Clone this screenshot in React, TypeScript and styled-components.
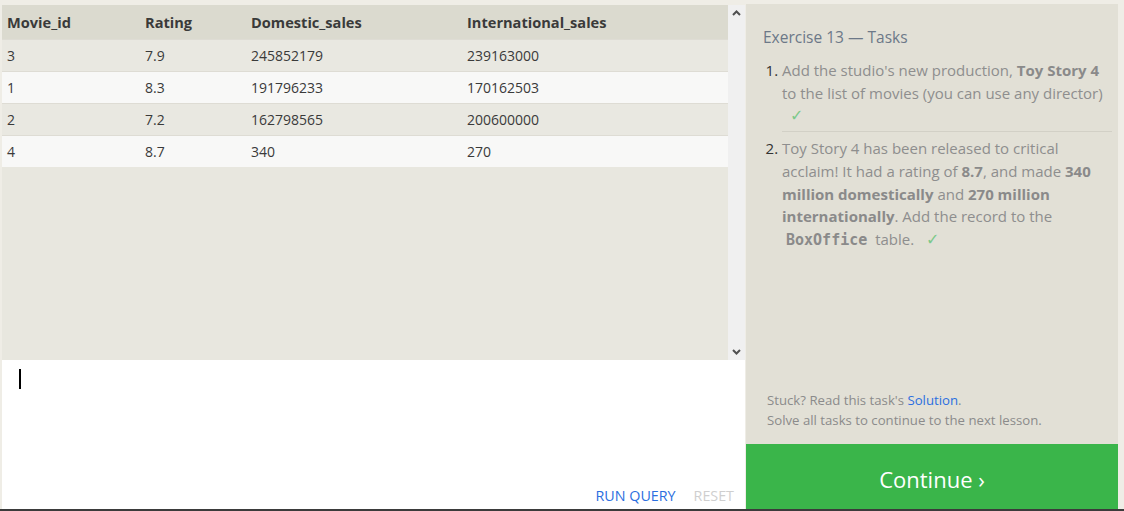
import React from "react";
import styled, { createGlobalStyle } from "styled-components";

const Global = createGlobalStyle`
  html, body { margin: 0; padding: 0; }
  body {
    background: #efede6;
    font-family: "Open Sans", "Noto Sans", sans-serif;
    overflow: hidden;
  }
`;

const Page = styled.div`
  width: 1124px;
  height: 511px;
  box-sizing: border-box;
  display: flex;
  padding: 4px 6px 0 2px;
  border-bottom: 2px solid #3b3b3b;
`;

const LeftCol = styled.div`
  width: 743px;
  display: flex;
  flex-direction: column;
  padding-top: 1px;
`;

const ResultArea = styled.div`
  height: 355px;
  display: flex;
  background: #e8e7df;
`;

const TableWrap = styled.div`
  flex: 1;
  overflow: hidden;
`;

const Table = styled.table`
  width: 100%;
  table-layout: fixed;
  border-collapse: collapse;
  font-size: 14px;
  color: #333;
`;

const Th = styled.th<{ $w?: number }>`
  box-sizing: border-box;
  text-align: left;
  font-weight: 700;
  font-size: 14.6px;
  background: #dbdacf;
  height: 34px;
  padding: 0 0 0 5px;
  width: ${(p) => (p.$w ? `${p.$w}px` : "auto")};
  color: #3a3a3a;
`;

const Tr = styled.tr<{ $alt: boolean }>`
  background: ${(p) => (p.$alt ? "#f8f8f7" : "#e9e8e1")};
  border-top: 1px solid #dedcd4;
`;

const Td = styled.td`
  height: 31px;
  padding: 0 0 0 5px;
  color: #3a3a3a;
`;

const ScrollBar = styled.div`
  width: 17px;
  background: #f0f0f0;
  display: flex;
  flex-direction: column;
  justify-content: space-between;
  align-items: center;
  padding: 5px 0;
  box-sizing: border-box;
`;

const Editor = styled.div`
  flex: 1;
  background: #fff;
  display: flex;
  flex-direction: column;
  justify-content: space-between;
  padding: 9px 11px 4px 17px;
`;

const Caret = styled.div`
  width: 2px;
  height: 20px;
  background: #000;
`;

const Actions = styled.div`
  display: flex;
  justify-content: flex-end;
  gap: 18px;
  font-size: 14.3px;
`;

const ActionLink = styled.span<{ $muted?: boolean }>`
  color: ${(p) => (p.$muted ? "#cfcfcf" : "#2b6fe0")};
`;

const RightCol = styled.div`
  width: 372px;
  margin-left: 1px;
  background: #e2e0d6;
  display: flex;
  flex-direction: column;
`;

const TaskBody = styled.div`
  flex: 1;
  padding: 22px 6px 0 17px;
`;

const Title = styled.div`
  font-size: 15.5px;
  color: #6c7888;
  margin-bottom: 11px;
`;

const List = styled.ol`
  margin: 0;
  padding-left: 19px;
  font-size: 15px;
  line-height: 22.7px;
  color: #8e8e8e;
`;

const Item = styled.li<{ $sep?: boolean }>`
  &::marker { color: #333; }
  ${(p) =>
    p.$sep
      ? `border-bottom: 1px solid #d2d0c6; padding-bottom: 3px; margin-bottom: 5px;`
      : ""}
`;

const B = styled.b`
  color: #8a8a8a;
`;

const Code = styled.code`
  font-family: "DejaVu Sans Mono", monospace;
  font-weight: 700;
  font-size: 15px;
  padding: 0 4px;
  color: #8a8a8a;
`;

const Check = styled.span`
  color: #7cc98a;
  margin-left: 8px;
  font-size: 16px;
  font-family: "DejaVu Sans", sans-serif;
`;

const Footer = styled.div`
  padding: 0 0 14px 21px;
  font-size: 13.2px;
  line-height: 20px;
  color: #8b8b8b;
`;

const Link = styled.span`
  color: #2b6fe0;
`;

const Continue = styled.div`
  height: 65px;
  box-sizing: border-box;
  padding-top: 5px;
  background: #3ab54a;
  color: #fff;
  font-size: 22px;
  display: flex;
  align-items: center;
  justify-content: center;
`;

const Arrow = ({ up }: { up?: boolean }) => (
  <svg width="9" height="6" viewBox="0 0 9 6">
    <path
      d={up ? "M1 5 L4.5 1.5 L8 5" : "M1 1 L4.5 4.5 L8 1"}
      fill="none"
      stroke="#505050"
      strokeWidth="2"
    />
  </svg>
);

const rows = [
  ["3", "7.9", "245852179", "239163000"],
  ["1", "8.3", "191796233", "170162503"],
  ["2", "7.2", "162798565", "200600000"],
  ["4", "8.7", "340", "270"],
];

export default function App() {
  return (
    <>
      <Global />
      <Page>
        <LeftCol>
          <ResultArea>
            <TableWrap>
              <Table>
                <thead>
                  <tr>
                    <Th $w={138}>Movie_id</Th>
                    <Th $w={106}>Rating</Th>
                    <Th $w={216}>Domestic_sales</Th>
                    <Th>International_sales</Th>
                  </tr>
                </thead>
                <tbody>
                  {rows.map((r, i) => (
                    <Tr key={i} $alt={i % 2 === 1}>
                      {r.map((c, j) => (
                        <Td key={j}>{c}</Td>
                      ))}
                    </Tr>
                  ))}
                </tbody>
              </Table>
            </TableWrap>
            <ScrollBar>
              <Arrow up />
              <Arrow />
            </ScrollBar>
          </ResultArea>
          <Editor>
            <Caret />
            <Actions>
              <ActionLink>RUN QUERY</ActionLink>
              <ActionLink $muted>RESET</ActionLink>
            </Actions>
          </Editor>
        </LeftCol>
        <RightCol>
          <TaskBody>
            <Title>Exercise 13 — Tasks</Title>
            <List>
              <Item $sep>
                Add the studio's new production, <B>Toy Story 4</B> to the list
                of movies (you can use any director) <Check>✓</Check>
              </Item>
              <Item>
                Toy Story 4 has been released to critical acclaim! It had a
                rating of <B>8.7</B>, and made <B>340 million domestically</B>{" "}
                and <B>270 million internationally</B>. Add the record to the{" "}
                <Code>BoxOffice</Code> table. <Check>✓</Check>
              </Item>
            </List>
          </TaskBody>
          <Footer>
            Stuck? Read this task's <Link>Solution</Link>.
            <br />
            Solve all tasks to continue to the next lesson.
          </Footer>
          <Continue>Continue ›</Continue>
        </RightCol>
      </Page>
    </>
  );
}
